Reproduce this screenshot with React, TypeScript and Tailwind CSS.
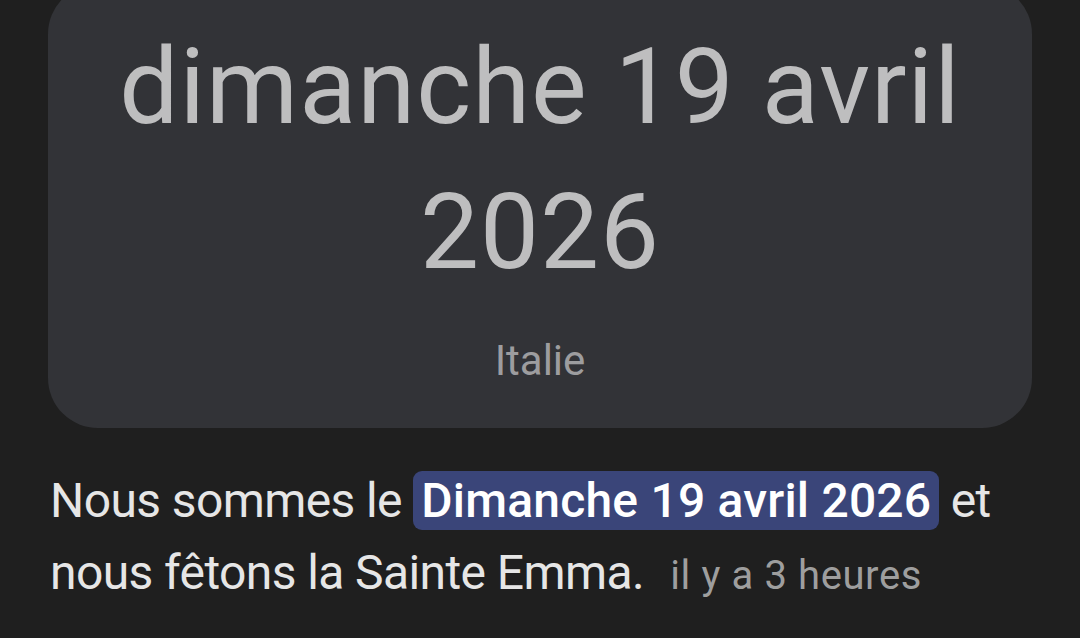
export default function App() {
  return (
    <div
      className="w-[1080px] h-[638px] overflow-hidden bg-[#1f1f1f] px-[48px]"
      style={{ fontFamily: "Roboto, 'Noto Sans', sans-serif" }}
    >
      <div className="-mt-[16px] rounded-[50px] bg-[#323337] pt-[31px] pb-[39px] flex flex-col items-center">
        <div className="text-center text-[105px] leading-[145px] text-[#bebebf] font-normal tracking-[1px]">
          dimanche 19 avril
          <br />
          2026
        </div>
        <div className="mt-[28px] text-[42px] leading-[56px] text-[#9d9d9f]">Italie</div>
      </div>
      <div className="mt-[37px] pl-[2px] text-[48px] leading-[72px] text-[#e6e6e6] tracking-[-0.6px]">
        Nous sommes le{" "}
        <span className="rounded-[9px] bg-[#3a4579] px-[8px] py-[1px] font-medium text-white tracking-[0.2px]">
          Dimanche 19 avril 2026
        </span>{" "}
        et nous fêtons la Sainte Emma.{" "}
        <span className="ml-[15px] text-[40px] text-[#9e9e9e] tracking-[0.6px]">il y a 3 heures</span>
      </div>
    </div>
  );
}
